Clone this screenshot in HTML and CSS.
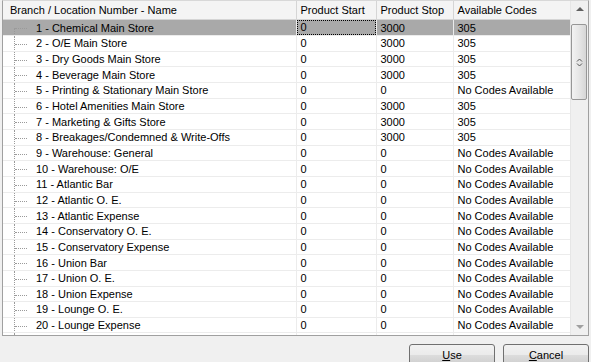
FILE: index.html
```html
<!DOCTYPE html>
<html lang="en">
<head>
    <meta charset="UTF-8">
    <title>Select Branch / Location</title>
    <link rel="stylesheet" href="styles.css">
</head>
<body>
    <div class="dialog">
        <div class="grid-box">
            <div class="grid">
                <table class="codes">
                    <colgroup>
                        <col class="c-name">
                        <col class="c-start">
                        <col class="c-stop">
                        <col class="c-codes">
                    </colgroup>
                    <thead>
                        <tr>
                            <th>Branch / Location Number - Name</th>
                            <th>Product Start</th>
                            <th>Product Stop</th>
                            <th>Available Codes</th>
                        </tr>
                    </thead>
                    <tbody>
                        <tr class="selected">
                            <td class="name first">1 - Chemical Main Store</td>
                            <td class="focus"><span>0</span></td>
                            <td>3000</td>
                            <td>305</td>
                        </tr>
                        <tr><td class="name">2 - O/E Main Store</td><td>0</td><td>3000</td><td>305</td></tr>
                        <tr><td class="name">3 - Dry Goods Main Store</td><td>0</td><td>3000</td><td>305</td></tr>
                        <tr><td class="name">4 - Beverage Main Store</td><td>0</td><td>3000</td><td>305</td></tr>
                        <tr><td class="name">5 - Printing &amp; Stationary Main Store</td><td>0</td><td>0</td><td>No Codes Available</td></tr>
                        <tr><td class="name">6 - Hotel Amenities Main Store</td><td>0</td><td>3000</td><td>305</td></tr>
                        <tr><td class="name">7 - Marketing &amp; Gifts Store</td><td>0</td><td>3000</td><td>305</td></tr>
                        <tr><td class="name">8 - Breakages/Condemned &amp; Write-Offs</td><td>0</td><td>3000</td><td>305</td></tr>
                        <tr><td class="name">9 - Warehouse: General</td><td>0</td><td>0</td><td>No Codes Available</td></tr>
                        <tr><td class="name">10 - Warehouse: O/E</td><td>0</td><td>0</td><td>No Codes Available</td></tr>
                        <tr><td class="name">11 - Atlantic Bar</td><td>0</td><td>0</td><td>No Codes Available</td></tr>
                        <tr><td class="name">12 - Atlantic O. E.</td><td>0</td><td>0</td><td>No Codes Available</td></tr>
                        <tr><td class="name">13 - Atlantic Expense</td><td>0</td><td>0</td><td>No Codes Available</td></tr>
                        <tr><td class="name">14 - Conservatory O. E.</td><td>0</td><td>0</td><td>No Codes Available</td></tr>
                        <tr><td class="name">15 - Conservatory Expense</td><td>0</td><td>0</td><td>No Codes Available</td></tr>
                        <tr><td class="name">16 - Union Bar</td><td>0</td><td>0</td><td>No Codes Available</td></tr>
                        <tr><td class="name">17 - Union O. E.</td><td>0</td><td>0</td><td>No Codes Available</td></tr>
                        <tr><td class="name">18 - Union Expense</td><td>0</td><td>0</td><td>No Codes Available</td></tr>
                        <tr><td class="name">19 - Lounge O. E.</td><td>0</td><td>0</td><td>No Codes Available</td></tr>
                        <tr><td class="name">20 - Lounge Expense</td><td>0</td><td>0</td><td>No Codes Available</td></tr>
                        <tr><td class="name">21 - Conservatory Bar</td><td>0</td><td>0</td><td>No Codes Available</td></tr>
                    </tbody>
                </table>
            </div>
            <div class="scrollbar">
                <div class="arrow up"></div>
                <div class="track">
                    <div class="thumb">
                        <svg width="7" height="9" viewBox="0 0 7 9">
                            <path d="M1 3.5 L3.5 1 L6 3.5 M1 5.5 L3.5 8 L6 5.5" fill="none" stroke="#555" stroke-width="1"/>
                        </svg>
                    </div>
                </div>
                <div class="arrow down"></div>
            </div>
        </div>
        <div class="buttons">
            <button><u>U</u>se</button>
            <button><u>C</u>ancel</button>
        </div>
    </div>
</body>
</html>
```

FILE: styles.css
```css
/* dialog */
body {
    margin: 0;
    background: #f0f0f0;
    font-family: "Liberation Sans", Arial, sans-serif;
    font-size: 11px;
    color: #000;
}
.dialog {
    width: 591px;
    height: 362px;
    overflow: hidden;
}
.grid-box {
    display: flex;
    width: 585px;
    height: 334px;
    margin-left: 2px;
    border: 1px solid #a0a0a0;
    border-top-color: #d8d8d8;
    background: #fff;
}
.grid {
    width: 568px;
    overflow: hidden;
}
.codes {
    table-layout: fixed;
    border-collapse: collapse;
    width: 568px;
}
.c-name { width: 293px; }
.c-start { width: 80px; }
.c-stop { width: 77px; }
.c-codes { width: 118px; }
.codes th {
    height: 18px;
    padding: 0 0 0 7px;
    text-align: left;
    font-weight: normal;
    background: #f4f4f4;
    border-right: 1px solid #d5d5d5;
    border-bottom: 1px solid #d5d5d5;
    white-space: nowrap;
    overflow: hidden;
}
.codes th + th { padding-left: 4px; }
.codes td {
    height: 14.67px;
    padding: 0 0 0 4px;
    border-right: 1px solid #ececec;
    border-bottom: 1px solid #ececec;
    white-space: nowrap;
    overflow: hidden;
    line-height: 14px;
}
.codes td.name {
    position: relative;
    padding-left: 33px;
}
/* tree connector lines */
.codes td.name::before {
    content: "";
    position: absolute;
    left: 11px;
    top: 0;
    bottom: -1px;
    border-left: 1px dotted #9a9a9a;
}
.codes td.name::after {
    content: "";
    position: absolute;
    left: 12px;
    top: 8px;
    width: 12px;
    border-top: 1px dotted #9a9a9a;
}
.codes td.first::before { top: 8px; }
.selected td {
    background: #a9a9a9;
}
.codes td.focus {
    padding: 0;
}
.focus span {
    display: block;
    height: 13px;
    padding-left: 3px;
    border: 1px dotted #000;
    line-height: 13px;
}
/* scrollbar */
.scrollbar {
    width: 17px;
    display: flex;
    flex-direction: column;
    background: #f0f0f0;
    border-left: 1px solid #e6e6e6;
}
.arrow {
    height: 17px;
    position: relative;
}
.arrow::after {
    content: "";
    position: absolute;
    left: 5px;
    border-left: 4px solid transparent;
    border-right: 4px solid transparent;
}
.arrow.up::after {
    top: 6px;
    border-bottom: 4px solid #606060;
}
.arrow.down::after {
    top: 7px;
    border-top: 4px solid #a0a0a0;
}
.track {
    flex: 1;
    padding: 6px 0 0 0;
}
.thumb {
    height: 74px;
    width: 14px;
    border: 1px solid #979797;
    border-radius: 2px;
    background: linear-gradient(to right, #f3f3f3, #e6e6e6 50%, #d6d6d6);
    display: flex;
    align-items: center;
    justify-content: center;
}
/* buttons */
.buttons {
    display: flex;
    justify-content: flex-end;
    gap: 8px;
    padding: 8px 2px 0 0;
}
.buttons button {
    width: 86px;
    height: 21px;
    font-family: "Liberation Sans", Arial, sans-serif;
    font-size: 11px;
    border: 1px solid #707070;
    border-radius: 3px;
    background: linear-gradient(#f2f2f2 0%, #ebebeb 50%, #dddddd 51%, #cfcfcf 100%);
    padding: 0;
}
```
